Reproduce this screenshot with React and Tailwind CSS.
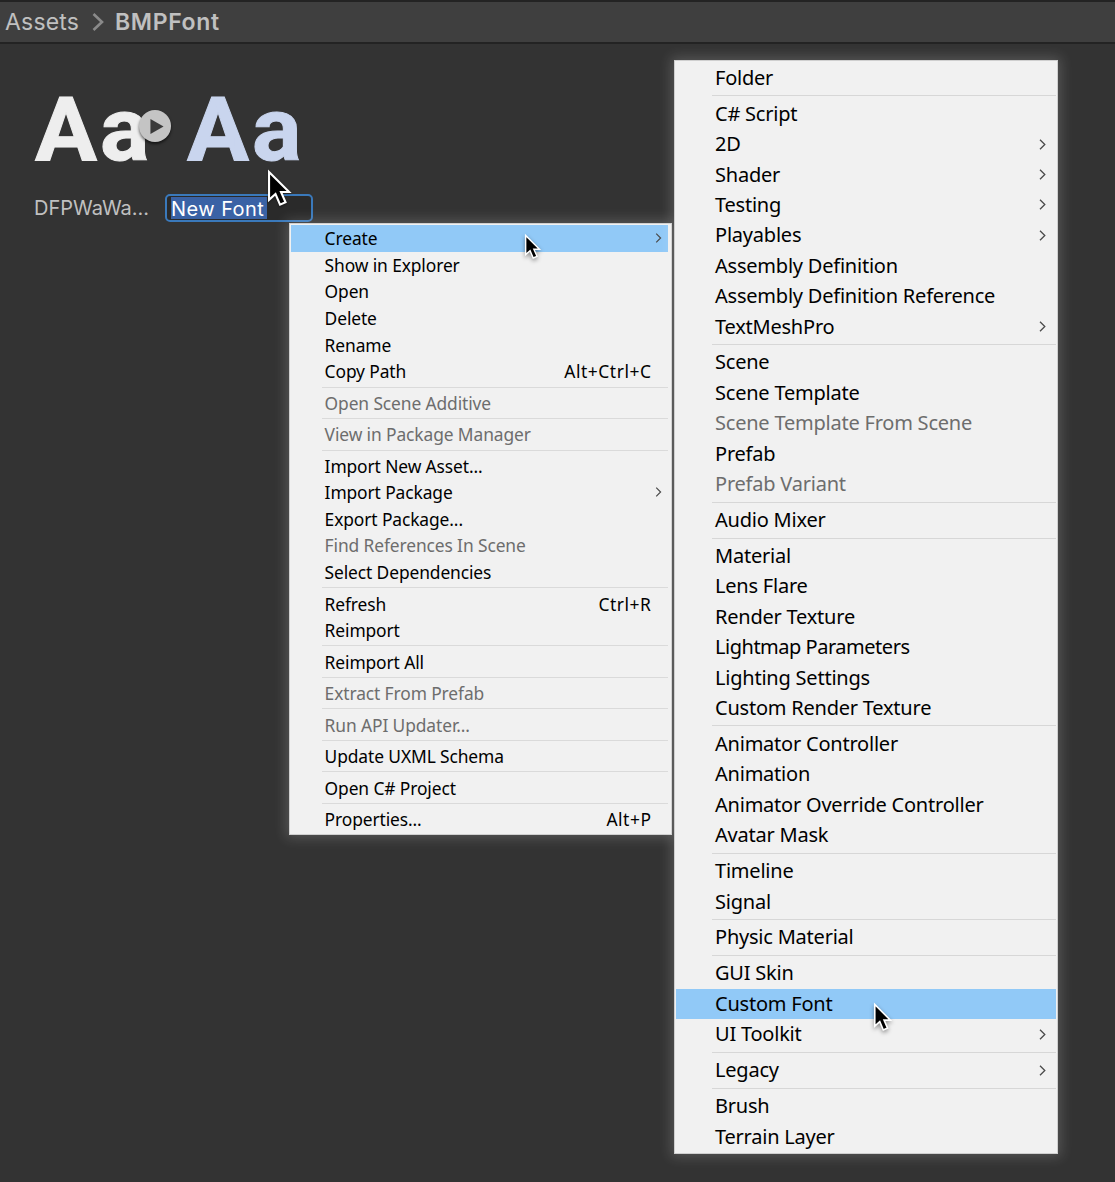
const SEP = "-";

const contextItems = [
  { label: "Create", sub: true, active: true },
  { label: "Show in Explorer" },
  { label: "Open" },
  { label: "Delete" },
  { label: "Rename" },
  { label: "Copy Path", keys: "Alt+Ctrl+C" },
  SEP,
  { label: "Open Scene Additive", disabled: true },
  SEP,
  { label: "View in Package Manager", disabled: true },
  SEP,
  { label: "Import New Asset..." },
  { label: "Import Package", sub: true },
  { label: "Export Package..." },
  { label: "Find References In Scene", disabled: true },
  { label: "Select Dependencies" },
  SEP,
  { label: "Refresh", keys: "Ctrl+R" },
  { label: "Reimport" },
  SEP,
  { label: "Reimport All" },
  SEP,
  { label: "Extract From Prefab", disabled: true },
  SEP,
  { label: "Run API Updater...", disabled: true },
  SEP,
  { label: "Update UXML Schema" },
  SEP,
  { label: "Open C# Project" },
  SEP,
  { label: "Properties...", keys: "Alt+P" },
];

const createItems = [
  { label: "Folder" },
  SEP,
  { label: "C# Script" },
  { label: "2D", sub: true },
  { label: "Shader", sub: true },
  { label: "Testing", sub: true },
  { label: "Playables", sub: true },
  { label: "Assembly Definition" },
  { label: "Assembly Definition Reference" },
  { label: "TextMeshPro", sub: true },
  SEP,
  { label: "Scene" },
  { label: "Scene Template" },
  { label: "Scene Template From Scene", disabled: true },
  { label: "Prefab" },
  { label: "Prefab Variant", disabled: true },
  SEP,
  { label: "Audio Mixer" },
  SEP,
  { label: "Material" },
  { label: "Lens Flare" },
  { label: "Render Texture" },
  { label: "Lightmap Parameters", tight: true },
  { label: "Lighting Settings" },
  { label: "Custom Render Texture" },
  SEP,
  { label: "Animator Controller" },
  { label: "Animation" },
  { label: "Animator Override Controller" },
  { label: "Avatar Mask" },
  SEP,
  { label: "Timeline" },
  { label: "Signal" },
  SEP,
  { label: "Physic Material" },
  SEP,
  { label: "GUI Skin" },
  { label: "Custom Font", active: true },
  { label: "UI Toolkit", sub: true },
  SEP,
  { label: "Legacy", sub: true },
  SEP,
  { label: "Brush" },
  { label: "Terrain Layer" },
];

function Chevron({ className }) {
  return (
    <svg viewBox="0 0 7 11" className={className} fill="none" stroke="#4a4a4a" strokeWidth="1.3">
      <path d="M1 .7 5.8 5.5 1 10.3" />
    </svg>
  );
}

function Cursor({ className }) {
  return (
    <svg viewBox="0 0 23 38" className={className} overflow="visible">
      <path
        d="M1 2V31.5L7.8 25.4 12.6 36.6 18.4 34 13.6 23.2H22.2Z"
        fill="#000"
        stroke="#fff"
        strokeWidth="2.2"
      />
    </svg>
  );
}

function ContextMenu() {
  return (
    <div className="absolute left-[289px] top-[223px] flex h-[612px] w-[383px] flex-col border border-[#cfcfcf] bg-[#f1f1f1] py-px pl-px pr-[3px] font-['Noto_Sans',sans-serif] text-[17.4px] tracking-[-0.11px] text-black shadow-[0_0_12px_3px_rgba(255,255,255,0.17)]">
      {contextItems.map((item, i) =>
        item === SEP ? (
          <div key={i} className="ml-[31px] flex h-[4.92px] shrink-0 items-center">
            <div className="h-px w-full bg-[#dadada]" />
          </div>
        ) : (
          <div
            key={i}
            className={`flex h-[26.6px] shrink-0 items-center pl-[33.6px] ${item.active ? "bg-[#91c9f7]" : ""} ${item.disabled ? "text-[#6d6d6d]" : ""}`}
          >
            <span className="whitespace-nowrap">{item.label}</span>
            {item.keys && (
              <span className="ml-auto mr-[16.5px] whitespace-nowrap tracking-[0.55px]">{item.keys}</span>
            )}
            {item.sub && <Chevron className="ml-auto mr-[6px] h-[10px] w-[7px]" />}
          </div>
        )
      )}
    </div>
  );
}

function CreateMenu() {
  return (
    <div className="absolute left-[674px] top-[60px] flex h-[1094px] w-[384px] flex-col border border-[#cfcfcf] bg-[#f1f1f1] px-px pt-[1.6px] font-['Noto_Sans',sans-serif] text-[20px] tracking-[-0.22px] text-black shadow-[0_0_12px_3px_rgba(255,255,255,0.17)]">
      {createItems.map((item, i) =>
        item === SEP ? (
          <div key={i} className="ml-[36px] flex h-[5.6px] shrink-0 items-center">
            <div className="h-px w-full bg-[#d7d7d7]" />
          </div>
        ) : (
          <div
            key={i}
            className={`flex h-[30.4px] shrink-0 items-center pl-[39px] ${item.active ? "bg-[#91c9f7]" : ""} ${item.disabled ? "text-[#6d6d6d]" : ""}`}
          >
            <span className={item.tight ? "whitespace-nowrap tracking-[-0.48px]" : "whitespace-nowrap"}>
              {item.label}
            </span>
            {item.sub && <Chevron className="ml-auto mr-[10px] h-[11px] w-[7px]" />}
          </div>
        )
      )}
    </div>
  );
}

export default function App() {
  return (
    <div className="relative h-[1182px] w-[1115px] overflow-hidden bg-[#333333] font-['Inter',sans-serif]">
      <header className="flex h-[44px] items-center border-b-2 border-t-2 border-[#232323] bg-[#3f3f3f] pl-[5px] text-[23px] text-[#c0c0c0]">
        <span className="w-[87px] tracking-[0.2px]">Assets</span>
        <svg viewBox="0 0 12 18" className="h-[18px] w-[12px]" fill="none" stroke="#8a8a8a" strokeWidth="2.6">
          <path d="M1.5 1 10 9 1.5 17" />
        </svg>
        <span className="ml-[11px] font-semibold tracking-[0.65px]">BMPFont</span>
      </header>
      <main className="flex pl-[34px] pt-[40px]">
        <section className="w-[131px]">
          <div className="relative h-[92px] pl-px font-['Roboto',sans-serif] text-[89px] font-bold leading-[92px] tracking-[3px] text-[#eeeeee] [-webkit-text-stroke:1px_#eeeeee]">
            <span className="block origin-left scale-x-[1.037]">Aa</span>
            <span className="absolute left-[105px] top-[26px] flex size-[32px] items-center justify-center rounded-full bg-[#c4c4c4] shadow-[0_2px_3px_rgba(0,0,0,0.6)]">
              <svg viewBox="0 0 14 16" className="ml-[3px] h-[15px] w-[14px]" fill="#3a3a3a">
                <path d="M0 0 14 8 0 16Z" />
              </svg>
            </span>
          </div>
          <div className="mt-[18px] h-[28px] whitespace-nowrap text-[20px] leading-[28px] text-[#c0c0c0]">DFPWaWa...</div>
        </section>
        <section className="w-[150px]">
          <div className="ml-[22px] h-[92px] origin-left scale-x-[1.037] font-['Roboto',sans-serif] text-[89px] font-bold leading-[92px] tracking-[3px] text-[#c9d5ee] [-webkit-text-stroke:1px_#c9d5ee]">
            Aa
          </div>
          <div className="mt-[18px] flex h-[28px] w-[148px] items-center rounded-[5px] border-2 border-[#3a79bb] bg-[#2a2a2a] pl-[4px] text-[20px] text-white">
            <span className="h-[22px] w-[96px] whitespace-nowrap bg-[#3a62a5] leading-[24px] tracking-[0.45px]">New Font</span>
          </div>
        </section>
      </main>
      <ContextMenu />
      <CreateMenu />
      <Cursor className="absolute left-[268px] top-[170px] h-[36px] w-[22px] drop-shadow-[0_1px_1px_rgba(0,0,0,0.4)]" />
      <Cursor className="absolute left-[525px] top-[234px] h-[25px] w-[15px] drop-shadow-[0_2px_2px_rgba(0,0,0,0.4)]" />
      <Cursor className="absolute left-[874px] top-[1003px] h-[28px] w-[17px] drop-shadow-[0_2px_2px_rgba(0,0,0,0.4)]" />
    </div>
  );
}
